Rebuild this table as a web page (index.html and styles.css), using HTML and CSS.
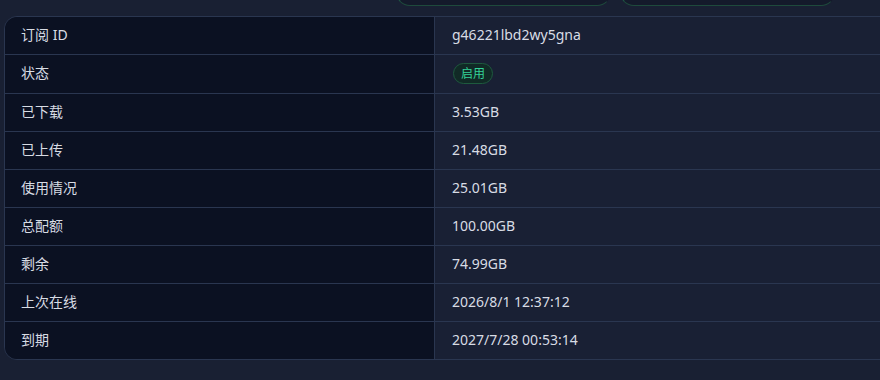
FILE: index.html
```html
<!DOCTYPE html>
<html lang="zh">
<head>
<meta charset="utf-8">
<link rel="stylesheet" href="styles.css">
</head>
<body>
<div class="page">
  <div class="actions">
    <div class="btn"></div>
    <div class="btn"></div>
  </div>
  <table class="info">
    <tr><td class="k">订阅 ID</td><td class="v">g46221lbd2wy5gna</td></tr>
    <tr class="tall"><td class="k">状态</td><td class="v"><span class="badge">启用</span></td></tr>
    <tr><td class="k">已下载</td><td class="v">3.53GB</td></tr>
    <tr><td class="k">已上传</td><td class="v">21.48GB</td></tr>
    <tr><td class="k">使用情况</td><td class="v">25.01GB</td></tr>
    <tr><td class="k">总配额</td><td class="v">100.00GB</td></tr>
    <tr><td class="k">剩余</td><td class="v">74.99GB</td></tr>
    <tr><td class="k">上次在线</td><td class="v">2026/8/1 12:37:12</td></tr>
    <tr><td class="k">到期</td><td class="v">2027/7/28 00:53:14</td></tr>
  </table>
</div>
</body>
</html>
```

FILE: styles.css
```css
html, body {
  margin: 0;
  padding: 0;
  background: #192033;
  overflow: hidden;
}
body {
  font-family: "Segoe UI", "Noto Sans", "Noto Sans CJK SC", sans-serif;
  color: #d8dce4;
  font-size: 14px;
}
.page {
  width: 940px;
  padding-left: 4px;
}
.actions {
  display: flex;
  gap: 9px;
  margin-left: 392px;
  margin-top: -40px;
  height: 47px;
  margin-bottom: 9px;
}
.btn {
  width: 215px;
  height: 46px;
  box-sizing: border-box;
  background: #141a2b;
  border-radius: 14px;
  border: 1px solid transparent;
  border-left-color: #1f5a45;
  border-bottom-color: #1e4a3c;
}
.info {
  border-collapse: separate;
  border-spacing: 0;
  width: 930px;
  border: 1px solid #2a3650;
  border-radius: 13px 0 0 13px;
}
.info td {
  height: 38px;
  padding: 0 0 2px 17px;
  box-sizing: border-box;
  border-bottom: 1px solid #2a3650;
  vertical-align: middle;
  line-height: 20px;
}
.info tr:last-child td {
  border-bottom: none;
  height: 37px;
}
.info tr.tall td {
  height: 39px;
}
.info td.k {
  width: 430px;
  box-sizing: border-box;
  background: #0b1122;
  border-right: 1px solid #2a3650;
  padding-left: 16px;
}
.info tr:first-child td.k {
  border-top-left-radius: 12px;
}
.info tr:last-child td.k {
  border-bottom-left-radius: 12px;
}
.info td.v {
  background: #192034;
  padding-left: 17px;
}
.badge {
  display: inline-block;
  font-size: 12px;
  line-height: 19px;
  padding: 0 7px;
  border: 1px solid #1e5a3e;
  border-radius: 11px;
  background: #112a26;
  color: #34d399;
  margin-left: 1px;
}
```
